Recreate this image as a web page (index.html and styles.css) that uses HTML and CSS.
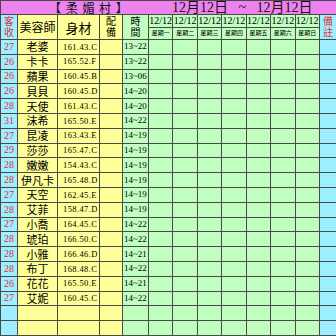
FILE: index.html
```html
<!DOCTYPE html>
<html lang="zh-Hant">
<head>
<meta charset="utf-8">
<link rel="stylesheet" href="styles.css">
</head>
<body>
<table class="sheet">
  <colgroup>
    <col class="c-age"><col class="c-name"><col class="c-body"><col class="c-eq"><col class="c-time">
    <col class="c-day"><col class="c-day"><col class="c-day"><col class="c-day"><col class="c-day"><col class="c-day"><col class="c-day">
    <col class="c-note">
  </colgroup>
  <tr class="r-title">
    <td colspan="13" class="title">
      <div class="title-bar"><span class="shop">【&nbsp;柔&nbsp;媚&nbsp;村&nbsp;】</span><span class="range">12月12日&nbsp;&nbsp;&nbsp;~&nbsp;&nbsp;&nbsp;12月12日</span></div>
    </td>
  </tr>
  <tr class="r-h1">
    <td rowspan="2" class="cy red"><span class="vert">客收</span></td>
    <td rowspan="2" class="ye h-name">美容師</td>
    <td rowspan="2" class="ye h-body">身材</td>
    <td rowspan="2" class="ye"><span class="vert">配備</span></td>
    <td rowspan="2" class="gr"><span class="vert">時間</span></td>
    <td class="gr date">12/12</td><td class="gr date">12/12</td><td class="gr date">12/12</td><td class="gr date">12/12</td><td class="gr date">12/12</td><td class="gr date">12/12</td><td class="gr date">12/12</td>
    <td rowspan="2" class="cy red"><span class="vert">備註</span></td>
  </tr>
  <tr class="r-h2">
    <td class="gr wk">星期一</td><td class="gr wk">星期二</td><td class="gr wk">星期三</td><td class="gr wk">星期四</td><td class="gr wk">星期五</td><td class="gr wk">星期六</td><td class="gr wk">星期日</td>
  </tr>
  <tr class="row"><td class="cy red age">27</td><td class="ye nm">老婆</td><td class="ye num">161.43.C</td><td class="ye"></td><td class="gr tm">13~22</td><td class="gr"></td><td class="gr"></td><td class="gr"></td><td class="gr"></td><td class="gr"></td><td class="gr"></td><td class="gr"></td><td class="cy"></td></tr>
  <tr class="row"><td class="cy red age">26</td><td class="ye nm">卡卡</td><td class="ye num">165.52.F</td><td class="ye"></td><td class="gr tm">13~22</td><td class="gr"></td><td class="gr"></td><td class="gr"></td><td class="gr"></td><td class="gr"></td><td class="gr"></td><td class="gr"></td><td class="cy"></td></tr>
  <tr class="row"><td class="cy red age">26</td><td class="ye nm">蘋果</td><td class="ye num">160.45.B</td><td class="ye"></td><td class="gr tm">13~06</td><td class="gr"></td><td class="gr"></td><td class="gr"></td><td class="gr"></td><td class="gr"></td><td class="gr"></td><td class="gr"></td><td class="cy"></td></tr>
  <tr class="row"><td class="cy red age">26</td><td class="ye nm">貝貝</td><td class="ye num">160.45.D</td><td class="ye"></td><td class="gr tm">14~20</td><td class="gr"></td><td class="gr"></td><td class="gr"></td><td class="gr"></td><td class="gr"></td><td class="gr"></td><td class="gr"></td><td class="cy"></td></tr>
  <tr class="row"><td class="cy red age">28</td><td class="ye nm">天使</td><td class="ye num">161.43.C</td><td class="ye"></td><td class="gr tm">14~20</td><td class="gr"></td><td class="gr"></td><td class="gr"></td><td class="gr"></td><td class="gr"></td><td class="gr"></td><td class="gr"></td><td class="cy"></td></tr>
  <tr class="row"><td class="cy red age">31</td><td class="ye nm">沫希</td><td class="ye num">165.50.E</td><td class="ye"></td><td class="gr tm">14~22</td><td class="gr"></td><td class="gr"></td><td class="gr"></td><td class="gr"></td><td class="gr"></td><td class="gr"></td><td class="gr"></td><td class="cy"></td></tr>
  <tr class="row"><td class="cy red age">27</td><td class="ye nm">昆凌</td><td class="ye num">163.43.E</td><td class="ye"></td><td class="gr tm">14~19</td><td class="gr"></td><td class="gr"></td><td class="gr"></td><td class="gr"></td><td class="gr"></td><td class="gr"></td><td class="gr"></td><td class="cy"></td></tr>
  <tr class="row"><td class="cy red age">29</td><td class="ye nm">莎莎</td><td class="ye num">165.47.C</td><td class="ye"></td><td class="gr tm">14~19</td><td class="gr"></td><td class="gr"></td><td class="gr"></td><td class="gr"></td><td class="gr"></td><td class="gr"></td><td class="gr"></td><td class="cy"></td></tr>
  <tr class="row"><td class="cy red age">28</td><td class="ye nm">嫩嫩</td><td class="ye num">154.43.C</td><td class="ye"></td><td class="gr tm">14~19</td><td class="gr"></td><td class="gr"></td><td class="gr"></td><td class="gr"></td><td class="gr"></td><td class="gr"></td><td class="gr"></td><td class="cy"></td></tr>
  <tr class="row"><td class="cy red age">28</td><td class="ye nm">伊凡卡</td><td class="ye num">165.48.D</td><td class="ye"></td><td class="gr tm">14~19</td><td class="gr"></td><td class="gr"></td><td class="gr"></td><td class="gr"></td><td class="gr"></td><td class="gr"></td><td class="gr"></td><td class="cy"></td></tr>
  <tr class="row"><td class="cy red age">27</td><td class="ye nm">天空</td><td class="ye num">162.45.E</td><td class="ye"></td><td class="gr tm">14~19</td><td class="gr"></td><td class="gr"></td><td class="gr"></td><td class="gr"></td><td class="gr"></td><td class="gr"></td><td class="gr"></td><td class="cy"></td></tr>
  <tr class="row"><td class="cy red age">28</td><td class="ye nm">艾菲</td><td class="ye num">158.47.D</td><td class="ye"></td><td class="gr tm">14~19</td><td class="gr"></td><td class="gr"></td><td class="gr"></td><td class="gr"></td><td class="gr"></td><td class="gr"></td><td class="gr"></td><td class="cy"></td></tr>
  <tr class="row"><td class="cy red age">27</td><td class="ye nm">小喬</td><td class="ye num">164.45.C</td><td class="ye"></td><td class="gr tm">14~22</td><td class="gr"></td><td class="gr"></td><td class="gr"></td><td class="gr"></td><td class="gr"></td><td class="gr"></td><td class="gr"></td><td class="cy"></td></tr>
  <tr class="row"><td class="cy red age">28</td><td class="ye nm">琥珀</td><td class="ye num">166.50.C</td><td class="ye"></td><td class="gr tm">14~22</td><td class="gr"></td><td class="gr"></td><td class="gr"></td><td class="gr"></td><td class="gr"></td><td class="gr"></td><td class="gr"></td><td class="cy"></td></tr>
  <tr class="row"><td class="cy red age">28</td><td class="ye nm">小雅</td><td class="ye num">166.46.D</td><td class="ye"></td><td class="gr tm">14~21</td><td class="gr"></td><td class="gr"></td><td class="gr"></td><td class="gr"></td><td class="gr"></td><td class="gr"></td><td class="gr"></td><td class="cy"></td></tr>
  <tr class="row"><td class="cy red age">28</td><td class="ye nm">布丁</td><td class="ye num">168.48.C</td><td class="ye"></td><td class="gr tm">14~22</td><td class="gr"></td><td class="gr"></td><td class="gr"></td><td class="gr"></td><td class="gr"></td><td class="gr"></td><td class="gr"></td><td class="cy"></td></tr>
  <tr class="row"><td class="cy red age">26</td><td class="ye nm">花花</td><td class="ye num">165.50.E</td><td class="ye"></td><td class="gr tm">14~21</td><td class="gr"></td><td class="gr"></td><td class="gr"></td><td class="gr"></td><td class="gr"></td><td class="gr"></td><td class="gr"></td><td class="cy"></td></tr>
  <tr class="row"><td class="cy red age">27</td><td class="ye nm">艾妮</td><td class="ye num">160.45.C</td><td class="ye"></td><td class="gr tm">14~22</td><td class="gr"></td><td class="gr"></td><td class="gr"></td><td class="gr"></td><td class="gr"></td><td class="gr"></td><td class="gr"></td><td class="cy"></td></tr>
  <tr class="row"><td class="cy"></td><td class="ye"></td><td class="ye"></td><td class="ye"></td><td class="gr"></td><td class="gr"></td><td class="gr"></td><td class="gr"></td><td class="gr"></td><td class="gr"></td><td class="gr"></td><td class="gr"></td><td class="cy"></td></tr>
  <tr class="row"><td class="cy"></td><td class="ye"></td><td class="ye"></td><td class="ye"></td><td class="gr"></td><td class="gr"></td><td class="gr"></td><td class="gr"></td><td class="gr"></td><td class="gr"></td><td class="gr"></td><td class="gr"></td><td class="cy"></td></tr>
</table>
</body>
</html>
```
FILE: styles.css
```css
html, body { margin: 0; padding: 0; background: #fff; }
.sheet {
  width: 336px;
  table-layout: fixed;
  border-collapse: collapse;
  font-family: "Noto Sans CJK TC", "Liberation Serif", serif;
}
.c-age { width: 17px; }
.c-name { width: 40px; }
.c-body { width: 42px; }
.c-eq { width: 23px; }
.c-time { width: 26px; }
.c-day { width: 24.43px; }
.c-note { width: 17px; }
td {
  border: 1px solid #4a4a4a;
  padding: 0;
  text-align: center;
  vertical-align: middle;
  overflow: hidden;
  white-space: nowrap;
  line-height: 1;
}
.r-title { height: 14px; }
.r-h1 { height: 12.5px; }
.r-h2 { height: 12.5px; }
.row { height: 14.8px; }
.title { background: #ee82ee; overflow: visible; }
.title-bar { display: flex; align-items: center; height: 13px; line-height: 13px; font-size: 12px; color: #111; }
.shop { padding-left: 48px; width: 123px; text-align: left; letter-spacing: 1px; }
.range { font-family: "Liberation Serif", "Noto Sans CJK TC", serif; font-size: 14px; }
.cy { background: #9eefff; }
.ye { background: #ffff99; }
.gr { background: #c0ffc0; }
.red { color: #e0303a; }
.vert {
  display: inline-block;
  writing-mode: vertical-rl;
  text-orientation: upright;
  font-size: 10px;
  line-height: 11px;
  letter-spacing: 1px;
  vertical-align: middle;
}
.h-name { font-size: 12px; }
.h-body { font-size: 13px; }
.date { font-family: "Liberation Serif", serif; font-size: 10px; }
.wk { font-size: 6px; }
.age { font-family: "Liberation Serif", serif; font-size: 10px; }
.nm { font-size: 11px; }
.num { font-family: "Liberation Serif", serif; font-size: 8.5px; letter-spacing: 0.4px; text-align: left; padding-left: 5px; }
.tm { font-family: "Liberation Serif", serif; font-size: 9px; text-align: left; padding-left: 1px; }
```
